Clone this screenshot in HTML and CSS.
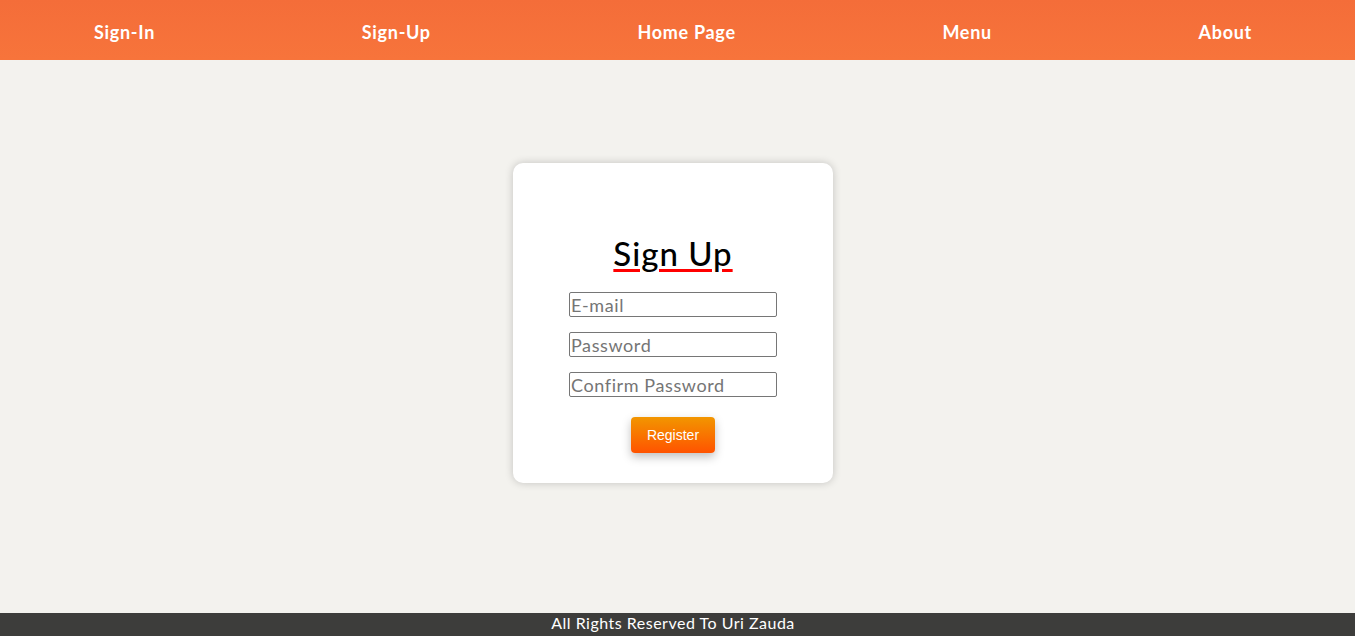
FILE: index.html
```html
<!DOCTYPE html>
<html lang="en">
<head>
<meta charset="utf-8">
<title>Sign Up</title>
<link rel="stylesheet" href="styles.css">
</head>
<body>
<nav class="topnav">
  <a class="navlink" href="#">Sign-In</a>
  <a class="navlink" href="#">Sign-Up</a>
  <a class="navlink" href="#">Home Page</a>
  <a class="navlink" href="#">Menu</a>
  <a class="navlink" href="#">About</a>
</nav>
<main class="content">
  <form class="card">
    <h1 class="title">Sign Up</h1>
    <input class="field" type="email" placeholder="E-mail">
    <input class="field" type="password" placeholder="Password">
    <input class="field" type="password" placeholder="Confirm Password">
    <button class="register" type="button">Register</button>
  </form>
</main>
<footer class="footer">All Rights Reserved To Uri Zauda</footer>
</body>
</html>
```

FILE: styles.css
```css
html, body {
  margin: 0;
  padding: 0;
}
body {
  min-height: 100vh;
  display: flex;
  flex-direction: column;
  background: #f3f2ee;
  font-family: "Lato", "Open Sans", sans-serif;
}
.topnav {
  height: 60px;
  flex: 0 0 60px;
  box-sizing: border-box;
  padding: 3px 103px 0 94px;
  display: flex;
  align-items: center;
  justify-content: space-between;
  background: linear-gradient(to bottom, #f46d39, #f7743b);
}
.navlink {
  color: #ffffff;
  text-decoration: none;
  font-weight: 700;
  font-size: 18px;
  letter-spacing: 0.7px;
}
.content {
  flex: 1;
  display: flex;
  justify-content: center;
  align-items: flex-start;
  padding: 103px 9px 0 0;
}
.card {
  width: 320px;
  height: 320px;
  box-sizing: border-box;
  background: #ffffff;
  border-radius: 10px;
  box-shadow: 0 0 8px rgba(0, 0, 0, 0.2);
  display: flex;
  flex-direction: column;
  align-items: center;
  padding-top: 71px;
}
.title {
  margin: 0 0 20px 0;
  font-size: 33px;
  line-height: 38px;
  font-weight: 500;
  letter-spacing: 1px;
  color: #000000;
  text-decoration: underline;
  text-decoration-color: #ff0000;
  text-decoration-thickness: 3px;
  text-underline-offset: 3px;
}
.field {
  width: 208px;
  height: 25px;
  box-sizing: border-box;
  margin: 0 0 15px 0;
  padding: 0 1px;
  border: 1px solid #767676;
  border-radius: 2px;
  font-family: "Lato", "Open Sans", sans-serif;
  font-size: 18px;
  letter-spacing: 0.6px;
  color: #000;
}
.field::placeholder {
  color: #757575;
}
.register {
  margin-top: 5px;
  width: 84px;
  height: 36px;
  border: none;
  border-radius: 4px;
  background: linear-gradient(to bottom, #f29600, #ff5300);
  color: #ffffff;
  font-family: "Liberation Sans", Arial, sans-serif;
  font-size: 14px;
  box-shadow: 0 4px 10px rgba(0, 0, 0, 0.25);
}
.footer {
  height: 23px;
  flex: 0 0 23px;
  box-sizing: border-box;
  padding-right: 9px;
  background: #3d3d3b;
  color: #ffffff;
  text-align: center;
  font-size: 16px;
  letter-spacing: 0.5px;
  line-height: 19px;
}
```
